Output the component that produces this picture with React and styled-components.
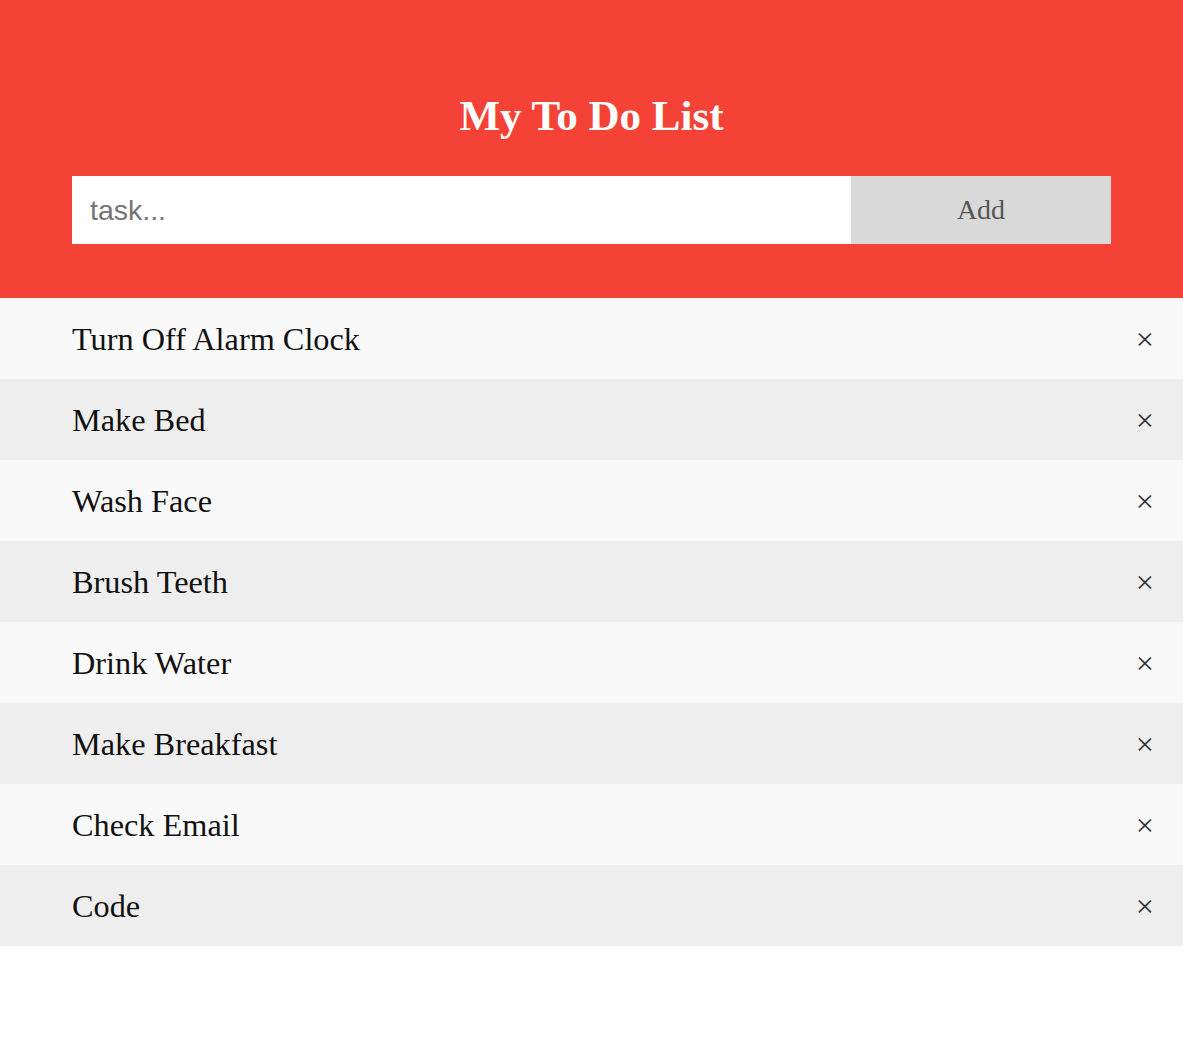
import React, { useState } from "react";
import styled, { createGlobalStyle } from "styled-components";

const GlobalStyle = createGlobalStyle`
  * { box-sizing: border-box; }
  body {
    margin: 0;
    background: #fff;
    font-family: "Liberation Serif", "Times New Roman", serif;
  }
`;

const initialTasks = [
  "Turn Off Alarm Clock",
  "Make Bed",
  "Wash Face",
  "Brush Teeth",
  "Drink Water",
  "Make Breakfast",
  "Check Email",
  "Code",
];

function App() {
  const [tasks, setTasks] = useState(initialTasks);
  const [value, setValue] = useState("");

  const addTask = () => {
    if (!value.trim()) return;
    setTasks([...tasks, value]);
    setValue("");
  };

  return (
    <>
      <GlobalStyle />
      <Header>
        <Title>My To Do List</Title>
        <InputRow>
          <TaskInput
            placeholder="task..."
            value={value}
            onChange={(e) => setValue(e.target.value)}
          />
          <AddButton onClick={addTask}>Add</AddButton>
        </InputRow>
      </Header>
      <List>
        {tasks.map((task, i) => (
          <Item key={i} $odd={i % 2 === 1}>
            <span>{task}</span>
            <Close onClick={() => setTasks(tasks.filter((_, j) => j !== i))}>
              {"\u00D7"}
            </Close>
          </Item>
        ))}
      </List>
    </>
  );
}

const Header = styled.div`
  background: #f44336;
  padding: 90px 72px 54px;
`;

const Title = styled.h2`
  margin: 0 0 34px;
  color: #fff;
  text-align: center;
  font-size: 43px;
  line-height: 52px;
  font-weight: bold;
`;

const InputRow = styled.div`
  display: flex;
  height: 68px;
`;

const TaskInput = styled.input`
  flex: 1;
  border: none;
  outline: none;
  padding: 0 18px;
  font-family: "Liberation Sans", Arial, sans-serif;
  font-size: 28.5px;
  color: #333;
  background: #fff;

  &::placeholder {
    color: #757575;
  }
`;

const AddButton = styled.button`
  width: 260px;
  border: none;
  background: #d9d9d9;
  color: #555;
  font-family: "Liberation Serif", "Times New Roman", serif;
  font-size: 28px;
  cursor: pointer;
`;

const List = styled.ul`
  margin: 0;
  padding: 0;
  list-style: none;
`;

const Item = styled.li`
  display: flex;
  justify-content: space-between;
  align-items: center;
  padding: 23px 29px 21px 72px;
  font-size: 32.3px;
  line-height: 37px;
  color: #111;
  background: ${(p) => (p.$odd ? "#eeeeee" : "#f9f9f9")};
`;

const Close = styled.span`
  color: #333;
  cursor: pointer;
`;

export default App;
